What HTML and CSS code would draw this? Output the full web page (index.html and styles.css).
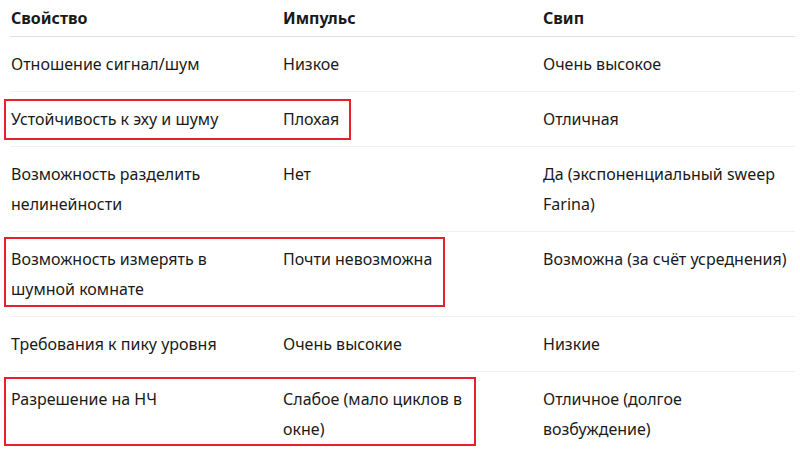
FILE: index.html
```html
<!DOCTYPE html>
<html lang="ru">
<head>
<meta charset="utf-8">
<title>Импульс vs Свип</title>
<link rel="stylesheet" href="styles.css">
</head>
<body>
<div class="wrap">
  <table class="cmp">
    <colgroup>
      <col class="c1">
      <col class="c2">
      <col class="c3">
    </colgroup>
    <thead>
      <tr><th>Свойство</th><th>Импульс</th><th>Свип</th></tr>
    </thead>
    <tbody>
      <tr><td>Отношение сигнал/шум</td><td>Низкое</td><td>Очень высокое</td></tr>
      <tr><td>Устойчивость к эху и шуму</td><td>Плохая</td><td>Отличная</td></tr>
      <tr><td>Возможность разделить нелинейности</td><td>Нет</td><td>Да (экспоненциальный sweep Farina)</td></tr>
      <tr><td>Возможность измерять в шумной комнате</td><td>Почти невозможна</td><td>Возможна (за счёт усреднения)</td></tr>
      <tr><td>Требования к пику уровня</td><td>Очень высокие</td><td>Низкие</td></tr>
      <tr><td>Разрешение на НЧ</td><td>Слабое (мало циклов в окне)</td><td>Отличное (долгое возбуждение)</td></tr>
    </tbody>
  </table>
  <div class="mark m1"></div>
  <div class="mark m2"></div>
  <div class="mark m3"></div>
</div>
</body>
</html>
```
FILE: styles.css
```css
html, body {
  margin: 0;
  padding: 0;
  background: #ffffff;
}
body {
  font-family: "Segoe UI", "Noto Sans", "Open Sans", sans-serif;
  font-size: 16px;
  color: #1a1a1a;
}
.wrap {
  position: relative;
  padding-left: 10px;
  width: 785px;
}
.cmp {
  width: 785px;
  border-collapse: collapse;
  table-layout: fixed;
}
.c1 { width: 272px; }
.c2 { width: 260px; }
.c3 { width: 253px; }
.cmp th,
.cmp td {
  text-align: left;
  vertical-align: top;
  line-height: 30px;
  padding: 12px 40px 12px 1px;
}
.cmp th:last-child,
.cmp td:last-child {
  padding-right: 6px;
}
.cmp th {
  font-weight: 700;
  padding-top: 3px;
  padding-bottom: 3px;
  border-bottom: 1px solid #e0e0e0;
}
.cmp td {
  font-weight: 400;
}
.cmp tbody tr {
  border-bottom: 1px solid #f0f0f0;
}
.cmp tbody tr:last-child {
  border-bottom: none;
}
.mark {
  position: absolute;
  border: 2px solid #e8202d;
  box-sizing: border-box;
}
.m1 { left: 4px; top: 99px; width: 347px; height: 41px; }
.m2 { left: 4px; top: 237px; width: 441px; height: 70px; }
.m3 { left: 4px; top: 377px; width: 472px; height: 69px; }
```
